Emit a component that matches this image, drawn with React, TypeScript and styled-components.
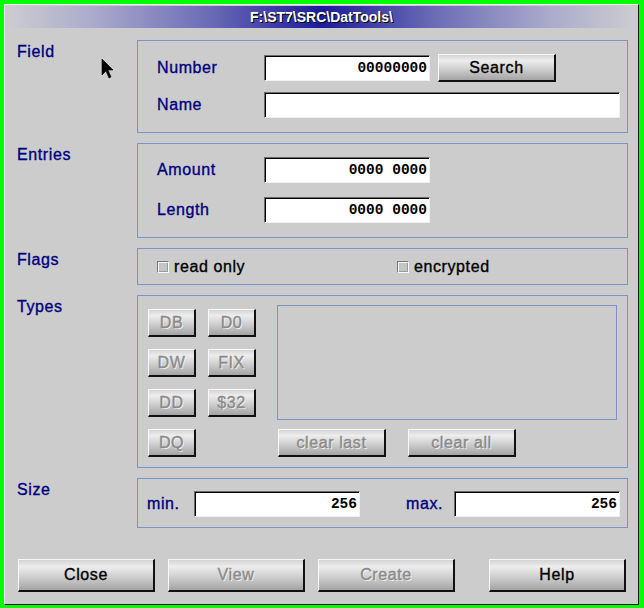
import React from "react";
import styled, { createGlobalStyle } from "styled-components";

const GlobalStyle = createGlobalStyle`
  html, body { margin: 0; padding: 0; background: #00ff00; }
  * { box-sizing: border-box; }
`;

const SANS = `"Liberation Sans", Arial, sans-serif`;
const MONO = `"Liberation Mono", "Courier New", monospace`;
const NAVY = "#00007f";
const FRAME = "#7a94c8";

const Screen = styled.div`
  width: 644px;
  height: 608px;
  padding: 4px 0 0 4px;
`;

const Window = styled.div`
  position: relative;
  width: 635px;
  height: 601px;
  background: #cccccc;
  border: 1px solid;
  border-color: #f4f4f4 #1a1a1a #1a1a1a #f4f4f4;
  display: flex;
  flex-direction: column;
`;

const TitleBar = styled.div`
  margin: 1px 1px 0 1px;
  height: 22px;
  display: flex;
  align-items: center;
  justify-content: center;
  background: linear-gradient(
    to right,
    #cdcdd0 0%,
    #aaaacb 14%,
    #6c6cb6 32%,
    #1c1c9c 50%,
    #6c6cb6 68%,
    #aaaacb 86%,
    #cdcdd0 100%
  );
  color: #fffff0;
  font: bold 14px ${SANS};
  text-shadow: 1px 1px 0 #000;
`;

const Body = styled.div`
  display: grid;
  grid-template-columns: 120px 491px;
  row-gap: 10px;
  padding: 12px 9px 0 12px;
`;

const labelText = `
  font: 16px/18px ${SANS};
  letter-spacing: 0.6px;
  -webkit-text-stroke: 0.35px currentColor;
`;

const SectionLabel = styled.div`
  padding-top: 3px;
  color: ${NAVY};
  ${labelText}
`;

const Frame = styled.div`
  border: 1px solid ${FRAME};
`;

const FieldFrame = styled(Frame)<{ $top: number; $bottom: number; $gap: number }>`
  display: flex;
  flex-direction: column;
  row-gap: ${(p) => p.$gap}px;
  padding: ${(p) => p.$top}px 0 ${(p) => p.$bottom}px 19px;
`;

const Row = styled.div`
  display: flex;
  align-items: center;
  height: 28px;
`;

const RowLabel = styled.span<{ $width: number }>`
  width: ${(p) => p.$width}px;
  color: ${NAVY};
  ${labelText}
`;

const TextField = styled.input<{ $width: number }>`
  width: ${(p) => p.$width}px;
  height: 26px;
  margin: 0;
  padding: 0 2px 0 4px;
  background: #ffffff;
  border: 1px solid;
  border-color: #6a6a6a #f0f0f0 #f0f0f0 #6a6a6a;
  box-shadow: inset 1px 1px 0 #000;
  text-align: right;
  color: #000;
  font: bold 14.5px/24px ${MONO};
  outline: none;
`;

const Button = styled.button<{ $width: number; $height: number }>`
  width: ${(p) => p.$width}px;
  height: ${(p) => p.$height}px;
  margin: 0;
  padding: 0;
  border-style: solid;
  border-width: 1px 2px 2px 1px;
  border-color: #f8f8f8 #101010 #101010 #f8f8f8;
  background: linear-gradient(
    to bottom,
    #d4d4d4 0%,
    #ededed 22%,
    #d0d0d0 55%,
    #a4a4a4 100%
  );
  color: #000;
  ${labelText}
  cursor: default;
  &:disabled {
    color: #8a8a8a;
    text-shadow: 1px 1px 0 #f4f4f4;
  }
`;

const FlagsFrame = styled(Frame)`
  height: 37px;
  display: flex;
  align-items: center;
  padding-left: 19px;
`;

const CheckItem = styled.label<{ $width?: number }>`
  display: flex;
  align-items: center;
  gap: 5px;
  width: ${(p) => (p.$width ? `${p.$width}px` : "auto")};
  color: #000;
  ${labelText}
`;

const CheckBox = styled.span`
  width: 12px;
  height: 12px;
  border: 1px solid;
  border-color: #777 #fafafa #fafafa #777;
  background: #c4c4c4;
  box-shadow: inset 1px 1px 0 #f4f4f4, inset -1px -1px 0 #9a9a9a;
`;

const TypesFrame = styled(Frame)`
  display: flex;
  padding: 9px 10px 10px 10px;
`;

const TypeGrid = styled.div`
  margin-top: 4px;
  display: grid;
  grid-template-columns: 48px 48px;
  grid-auto-rows: 28px;
  gap: 12px;
  align-content: start;
`;

const TypesRight = styled.div`
  margin-left: 21px;
  width: 340px;
  display: flex;
  flex-direction: column;
  row-gap: 9px;
`;

const ListArea = styled.div`
  height: 115px;
  border: 1px solid ${FRAME};
`;

const ClearRow = styled.div`
  display: flex;
  gap: 22px;
  padding-left: 1px;
`;

const SizeFrame = styled(Frame)`
  display: flex;
  align-items: center;
  padding: 12px 0 10px 9px;
`;

const SizeLabel = styled.span<{ $width: number; $gapBefore?: number }>`
  width: ${(p) => p.$width}px;
  margin-left: ${(p) => p.$gapBefore ?? 0}px;
  color: ${NAVY};
  ${labelText}
`;

const ButtonBar = styled.div`
  display: flex;
  gap: 13px;
  margin-top: 31px;
  padding: 0 12px 0 13px;
`;

const Spacer = styled.div`
  flex: 1;
`;

const Pointer = styled.svg`
  position: absolute;
  left: 96px;
  top: 53px;
`;

const types = ["DB", "D0", "DW", "FIX", "DD", "$32", "DQ"];

export default function App() {
  return (
    <>
      <GlobalStyle />
      <Screen>
        <Window>
          <TitleBar>F:\ST7\SRC\DatTools\</TitleBar>
          <Body>
            <SectionLabel>Field</SectionLabel>
            <FieldFrame $top={13} $bottom={13} $gap={9}>
              <Row>
                <RowLabel $width={107}>Number</RowLabel>
                <TextField $width={166} readOnly value="00000000" />
                <Button $width={118} $height={28} style={{ marginLeft: 8 }}>
                  Search
                </Button>
              </Row>
              <Row>
                <RowLabel $width={107}>Name</RowLabel>
                <TextField $width={356} readOnly value="" />
              </Row>
            </FieldFrame>

            <SectionLabel>Entries</SectionLabel>
            <FieldFrame $top={12} $bottom={13} $gap={12}>
              <Row>
                <RowLabel $width={107}>Amount</RowLabel>
                <TextField $width={166} readOnly value="0000 0000" />
              </Row>
              <Row>
                <RowLabel $width={107}>Length</RowLabel>
                <TextField $width={166} readOnly value="0000 0000" />
              </Row>
            </FieldFrame>

            <SectionLabel>Flags</SectionLabel>
            <FlagsFrame>
              <CheckItem $width={240}>
                <CheckBox />
                read only
              </CheckItem>
              <CheckItem>
                <CheckBox />
                encrypted
              </CheckItem>
            </FlagsFrame>

            <SectionLabel>Types</SectionLabel>
            <TypesFrame>
              <TypeGrid>
                {types.map((t) => (
                  <Button key={t} $width={48} $height={28} disabled>
                    {t}
                  </Button>
                ))}
              </TypeGrid>
              <TypesRight>
                <ListArea />
                <ClearRow>
                  <Button $width={108} $height={28} disabled>
                    clear last
                  </Button>
                  <Button $width={108} $height={28} disabled>
                    clear all
                  </Button>
                </ClearRow>
              </TypesRight>
            </TypesFrame>

            <SectionLabel>Size</SectionLabel>
            <SizeFrame>
              <SizeLabel $width={47}>min.</SizeLabel>
              <TextField $width={166} readOnly value="256" />
              <SizeLabel $width={48} $gapBefore={46}>
                max.
              </SizeLabel>
              <TextField $width={166} readOnly value="256" />
            </SizeFrame>
          </Body>

          <ButtonBar>
            <Button $width={137} $height={33}>Close</Button>
            <Button $width={137} $height={33} disabled>View</Button>
            <Button $width={137} $height={33} disabled>Create</Button>
            <Spacer />
            <Button $width={137} $height={33}>Help</Button>
          </ButtonBar>

          <Pointer width="14" height="22" viewBox="0 0 14 22">
            <path
              d="M1 1 L1 17 L5 13 L8 20 L10 19 L7 12 L12 12 Z"
              fill="#000"
              stroke="#000"
              strokeWidth="0.6"
            />
          </Pointer>
        </Window>
      </Screen>
    </>
  );
}
